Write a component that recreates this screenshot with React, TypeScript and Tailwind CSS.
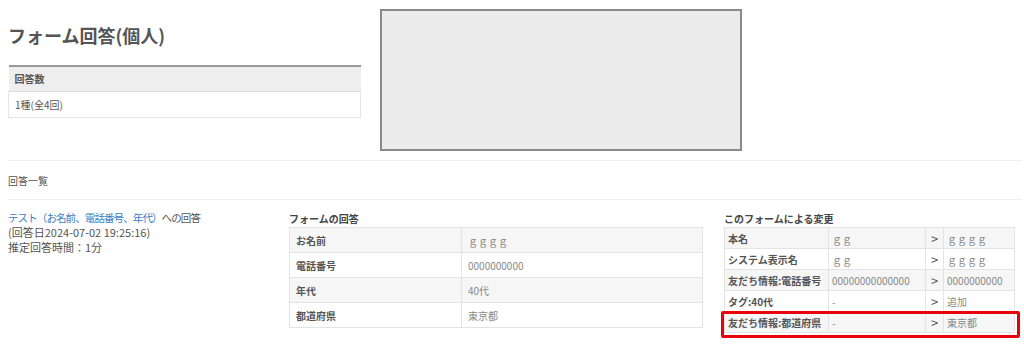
const font = { fontFamily: '"Noto Sans CJK JP", "Noto Sans", sans-serif' };

const formAnswers = [
  { label: "お名前", value: "ｇｇｇｇ" },
  { label: "電話番号", value: "0000000000" },
  { label: "年代", value: "40代" },
  { label: "都道府県", value: "東京都" },
];

const changes = [
  { label: "本名", before: "ｇｇ", after: "ｇｇｇｇ" },
  { label: "システム表示名", before: "ｇｇ", after: "ｇｇｇｇ" },
  { label: "友だち情報:電話番号", before: "00000000000000", after: "0000000000" },
  { label: "タグ:40代", before: "-", after: "追加" },
  { label: "友だち情報:都道府県", before: "-", after: "東京都" },
];

const App = () => {
  return (
    <div className="w-[1024px] h-[346px] bg-white text-[#555] overflow-hidden pl-[8px] pr-[2px]" style={font}>
      {/* ============ header ============ */}
      <div className="flex">
        <div className="w-[353px] pt-[24px]">
          <h1 className="text-[18px] leading-[22px] font-bold text-[#555]">フォーム回答(個人)</h1>
          <table className="w-full mt-[19px] border-collapse text-[10px]">
            <tbody>
              <tr className="bg-[#eee] border-t-2 border-[#999]">
                <th className="h-[25px] px-[6px] text-left font-bold border-b border-[#ddd]">回答数</th>
              </tr>
              <tr>
                <td className="h-[26px] px-[6px] border border-[#e5e5e5]">1種(全4回)</td>
              </tr>
            </tbody>
          </table>
        </div>
        <div className="ml-[19px] mt-[9px] w-[362px] h-[142px] bg-[#ececec] border-2 border-[#8a8a8a]"></div>
      </div>

      {/* ============ list heading ============ */}
      <div className="mt-[9px] border-t border-[#eee] h-[39px] flex items-center text-[10px] text-[#555]">回答一覧</div>

      {/* ============ answer ============ */}
      <div className="border-t border-[#eee] flex pt-[10px]">
        <div className="w-[281px] text-[11px] leading-[15px] text-[#555]">
          <p className="text-[10.5px] tracking-[-0.9px]">
            <span className="text-[#3b7dc4]">テスト（お名前、電話番号、年代）</span>への回答
          </p>
          <p>(回答日2024-07-02 19:25:16)</p>
          <p>推定回答時間：1分</p>
        </div>

        <div className="w-[414px]">
          <p className="text-[10px] font-bold leading-[17px] text-[#444]">フォームの回答</p>
          <table className="w-full border-collapse text-[10px]">
            <tbody>
              {formAnswers.map((r, i) => (
                <tr key={r.label} className={i % 2 === 0 ? "bg-[#f6f6f6]" : "bg-white"}>
                  <td className="w-[172px] h-[25px] px-[6px] border border-[#e3e3e3] font-bold text-[#555]">{r.label}</td>
                  <td className="px-[6px] border border-[#e3e3e3] text-[#888]">{r.value}</td>
                </tr>
              ))}
            </tbody>
          </table>
        </div>

        <div className="ml-[21px] w-[291px]">
          <p className="text-[10px] font-bold leading-[17px] text-[#444]">このフォームによる変更</p>
          <div className="relative">
            <table className="w-full border-collapse text-[10px]">
              <tbody>
                {changes.map((r, i) => (
                  <tr key={r.label} className={i % 2 === 0 ? "bg-[#f6f6f6]" : "bg-white"}>
                    <td className="w-[104px] h-[21px] px-[3px] border border-[#e3e3e3] font-bold text-[#555] whitespace-nowrap">{r.label}</td>
                    <td className="w-[97px] px-[3px] border border-[#e3e3e3] text-[#888] whitespace-nowrap">{r.before}</td>
                    <td className="w-[18px] border border-[#e3e3e3] text-center text-[13px] leading-[13px] text-[#555]">&gt;</td>
                    <td className="px-[3px] border border-[#e3e3e3] text-[#888] whitespace-nowrap">{r.after}</td>
                  </tr>
                ))}
              </tbody>
            </table>
            <div className="absolute left-[-3px] right-[-5px] bottom-[-5px] h-[27px] border-[3px] border-[#e8000b] rounded-[2px]"></div>
          </div>
        </div>
      </div>
    </div>
  );
};

export default App;
